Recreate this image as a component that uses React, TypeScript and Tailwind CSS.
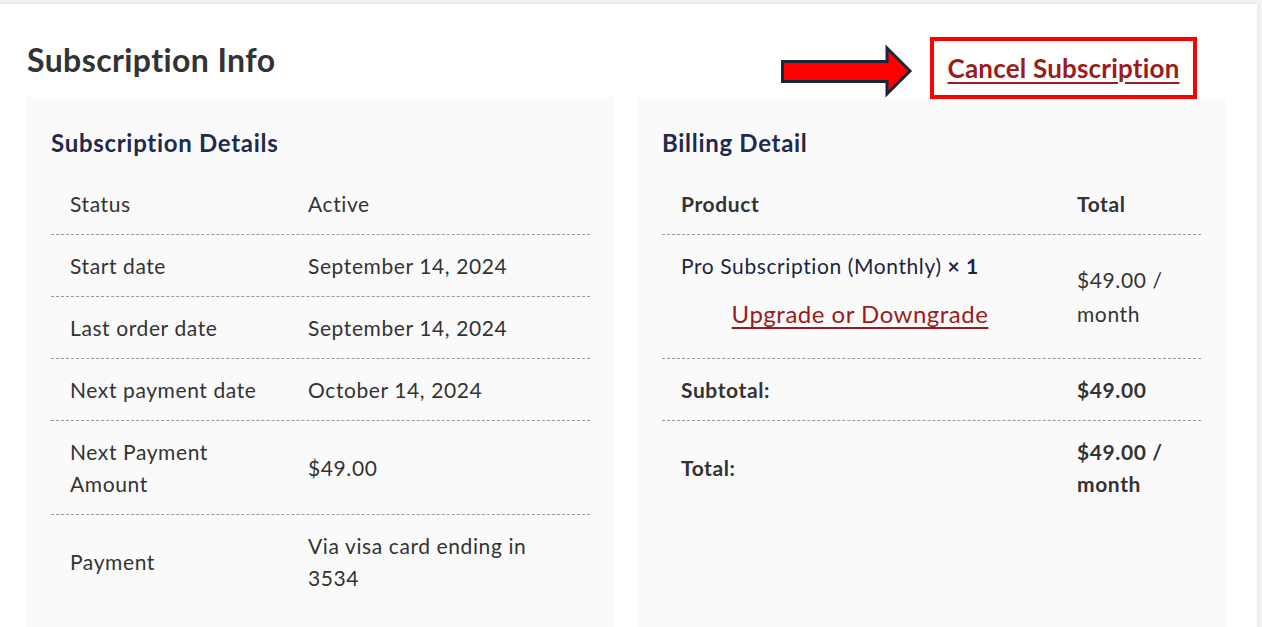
import React from "react";

const font = { fontFamily: "Lato, 'Noto Sans', sans-serif" };

function Row({ label, value, bold = false, last = false }: { label: React.ReactNode; value: React.ReactNode; bold?: boolean; last?: boolean }) {
  return (
    <div className={`grid grid-cols-[238px_1fr] ${last ? "" : "border-b border-dashed border-[#9a9a9a]"}`}>
      <div className={`flex items-center px-[19px] pt-[15px] pb-[14px] leading-[32px] ${bold ? "font-bold" : ""}`}>{label}</div>
      <div className={`flex items-center px-[19px] pt-[15px] pb-[14px] leading-[32px] ${bold ? "font-bold" : ""}`}>{value}</div>
    </div>
  );
}

function BRow({ label, value, bold = false, last = false }: { label: React.ReactNode; value: React.ReactNode; bold?: boolean; last?: boolean }) {
  return (
    <div className={`grid grid-cols-[396px_1fr] ${last ? "" : "border-b border-dashed border-[#9a9a9a]"}`}>
      <div className={`flex items-center px-[19px] pt-[15px] pb-[14px] leading-[32px] ${bold ? "font-bold" : ""}`}>{label}</div>
      <div className={`flex items-center px-[19px] pt-[15px] pb-[14px] leading-[32px] ${bold ? "font-bold" : ""}`}>{value}</div>
    </div>
  );
}

export default function App() {
  return (
    <div className="h-[627px] w-[1262px] overflow-hidden bg-[#f2f2f2] pt-[4px] pr-[5px]" style={font}>
      <div className="relative h-[640px] bg-white pl-[27px] pr-[32px] shadow-[0_0_4px_rgba(0,0,0,0.08)]">
        <div className="flex h-[93px] items-center pt-[18px]">
          <h1 className="text-[32px] font-bold leading-[40px] tracking-[0.4px] text-[#333333]">Subscription Info</h1>
        </div>

        {/* annotation arrow */}
        <svg className="absolute left-[780px] top-[40px]" width="134" height="54" viewBox="0 0 134 54">
          <path d="M2.5 17.5 H107 V4 L130 27 L107 50 V37.5 H2.5 Z" fill="#ff0000" stroke="#17283a" strokeWidth="3" strokeLinejoin="miter" />
        </svg>
        <div className="absolute left-[930px] top-[33px] z-10 flex h-[62px] w-[267px] items-center justify-center border-[4px] border-[#ff0000] bg-white">
          <a className="text-[26px] font-bold tracking-[0.2px] text-[#9b1c1c] underline decoration-[2px] underline-offset-[4px]" href="#">Cancel Subscription</a>
        </div>

        <div className="grid grid-cols-[587px_587px] gap-[24px]">
          <div className="h-[540px] bg-[#fafafa] px-[24px] pt-[31px]">
            <h2 className="mb-[15px] text-[24px] font-bold leading-[30px] tracking-[0.7px] text-[#1f2a4d]">Subscription Details</h2>
            <div className="text-[21px] tracking-[0.6px] text-[#333333]">
              <Row label="Status" value="Active" />
              <Row label="Start date" value="September 14, 2024" />
              <Row label="Last order date" value="September 14, 2024" />
              <Row label="Next payment date" value="October 14, 2024" />
              <Row label={<span>Next Payment<br />Amount</span>} value="$49.00" />
              <Row label="Payment" value={<span>Via visa card ending in<br />3534</span>} last />
            </div>
          </div>
          <div className="h-[540px] bg-[#fafafa] px-[24px] pt-[31px]">
            <h2 className="mb-[15px] text-[24px] font-bold leading-[30px] tracking-[0.7px] text-[#1f2a4d]">Billing Detail</h2>
            <div className="text-[21px] tracking-[0.6px] text-[#333333]">
              <BRow label="Product" value="Total" bold />
              <div className="grid grid-cols-[396px_1fr] border-b border-dashed border-[#9a9a9a]">
                <div className="px-[19px] pt-[15px] pb-[28px] leading-[32px]">
                  <div className="text-[#1c2541]">Pro Subscription (Monthly) <span className="font-bold">× 1</span></div>
                  <div className="mt-[16px] text-center text-[24px] leading-[32px] tracking-[0.5px]">
                    <a href="#" className="text-[#9b1c1c] underline decoration-[2px] underline-offset-[4px]">Upgrade or Downgrade</a>
                  </div>
                </div>
                <div className="flex items-center px-[19px] leading-[34px]">
                  <span>$49.00 /<br />month</span>
                </div>
              </div>
              <BRow label="Subtotal:" value="$49.00" bold />
              <BRow label="Total:" value={<span>$49.00 /<br />month</span>} bold last />
            </div>
          </div>
        </div>
      </div>
    </div>
  );
}
